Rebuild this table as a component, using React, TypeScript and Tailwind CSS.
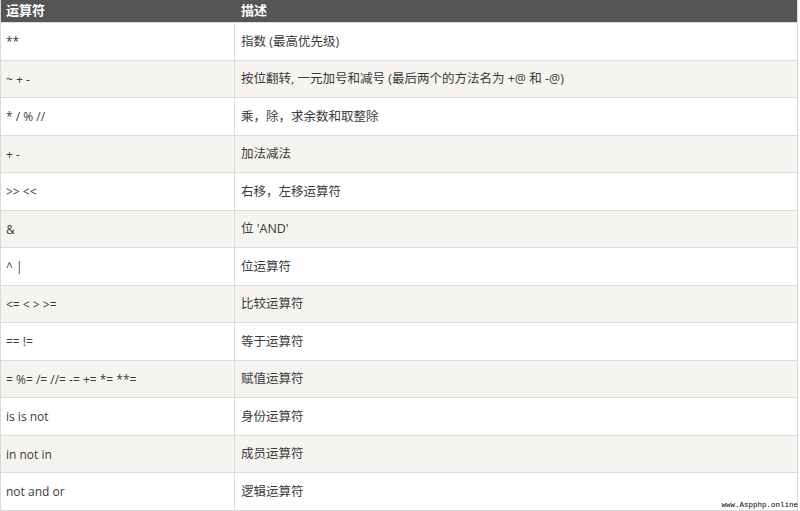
import React from 'react';

const rows: [string, string][] = [
  ['**', '指数 (最高优先级)'],
  ['~ + -', '按位翻转, 一元加号和减号 (最后两个的方法名为 +@ 和 -@)'],
  ['* / % //', '乘，除，求余数和取整除'],
  ['+ -', '加法减法'],
  ['>> <<', '右移，左移运算符'],
  ['&', "位 'AND'"],
  ['^ |', '位运算符'],
  ['<= < > >=', '比较运算符'],
  ['== !=', '等于运算符'],
  ['= %= /= //= -= += *= **=', '赋值运算符'],
  ['is is not', '身份运算符'],
  ['in not in', '成员运算符'],
  ['not and or', '逻辑运算符'],
];

export default function App() {
  return (
    <div
      className="relative w-[800px] h-[511px] bg-white overflow-hidden text-[#3a3a3a]"
      style={{ fontFamily: '"Open Sans", "Liberation Sans", "Noto Sans CJK SC", sans-serif' }}
    >
      <div className="w-[798px] border-l border-r border-b border-[#d8d8d8]">
        <div className="flex h-[22px] bg-[#555] text-white text-[13px] font-bold items-center">
          <div className="w-[234px] pl-[5px]">运算符</div>
          <div className="flex-1 pl-[6px]">描述</div>
        </div>
        {rows.map(([op, desc], i) => (
          <div
            key={i}
            className={`flex h-[37.5px] items-center border-t border-[#dcdcdc] ${i % 2 === 1 ? 'bg-[#f6f4f0]' : 'bg-white'}`}
          >
            <div className="w-[234px] h-full flex items-center pl-[5px] pt-[2px] text-[12px] border-r border-[#dcdcdc]">
              {op}
            </div>
            <div className="flex-1 pl-[6px] pt-[2px] text-[12.5px]">{desc}</div>
          </div>
        ))}
      </div>
      <div
        className="absolute right-[2px] bottom-[2px] text-[7.5px] text-black leading-none"
        style={{ fontFamily: '"Liberation Mono", monospace' }}
      >
        www.Aspphp.online
      </div>
    </div>
  );
}
